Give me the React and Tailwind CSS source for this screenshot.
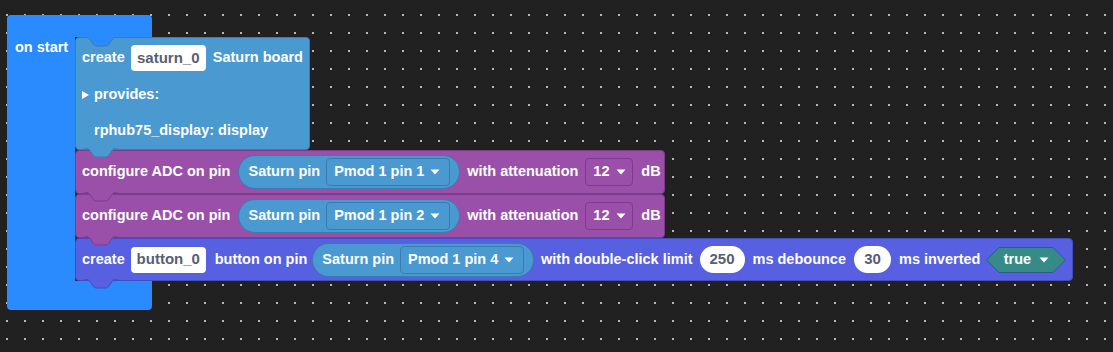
import React from "react";

// connection tab drawn under a block (or as the notch on the first one)
function Tab({ fill, stroke, className }) {
    return (
        <svg
            className={`absolute left-[7px] z-10 ${className}`}
            width="36"
            height="10"
            viewBox="0 0 36 10"
        >
            <path
                d="M1,0 C5,0 6,1 8,4 L10,7 C11,8.5 12,9 14,9 L22,9 C24,9 25,8.5 26,7 L28,4 C30,1 31,0 35,0"
                fill={fill}
                stroke={stroke}
                strokeWidth="1"
            />
        </svg>
    );
}

function Caret() {
    return (
        <svg width="10" height="6" viewBox="0 0 10 6" className="shrink-0">
            <polygon points="0.5,0.5 9.5,0.5 5,5.5" fill="#fff" />
        </svg>
    );
}

function Dropdown({ children, border, className = "" }) {
    return (
        <div
            className={`flex items-center h-[28px] rounded-[4px] border ${border} pl-[7px] pr-[8px] gap-[6px] ${className}`}
        >
            <span>{children}</span>
            <Caret />
        </div>
    );
}

function SaturnPin({ pin }) {
    return (
        <div className="flex items-center h-[34px] rounded-full bg-[#4a99d0] border border-[#3b7cae] pl-[9px] pr-[9px] gap-[6px]">
            <span>Saturn pin</span>
            <Dropdown border="border-[#3b7cae]" className="w-[124px]">
                Pmod 1 pin {pin}
            </Dropdown>
        </div>
    );
}

function TextField({ children, w }) {
    return (
        <div
            className={`flex items-center justify-center h-[26px] ${w} rounded-[4px] bg-white text-[#575e75] text-[15px]`}
        >
            {children}
        </div>
    );
}

function NumField({ children, w }) {
    return (
        <div
            className={`flex items-center justify-center h-[27px] ${w} rounded-full bg-white text-[#575e75] text-[15px]`}
        >
            {children}
        </div>
    );
}

function AdcBlock({ pin }) {
    return (
        <div className="relative flex items-center w-[590px] h-[44px] bg-[#9a50a8] border border-[#7b3c89] rounded-[4px] pl-[6px]">
            <span>configure ADC on pin</span>
            <div className="ml-[8px]">
                <SaturnPin pin={pin} />
            </div>
            <span className="ml-[7px]">with attenuation</span>
            <Dropdown border="border-[#7b3c89]" className="ml-[7px] w-[48px] pr-[6px]">
                12
            </Dropdown>
            <span className="ml-[8px]">dB</span>
            <Tab fill="#9a50a8" stroke="#7b3c89" className="top-full -mt-px" />
        </div>
    );
}

function App() {
    return (
        <div className="w-[1113px] h-[352px] overflow-hidden bg-[#212121] bg-[radial-gradient(circle,#b8b8b8_1px,transparent_1.5px)] bg-size-[18px_18px] bg-position-[-2px_6px] pl-[7px] pt-[15px] font-['Liberation_Sans',Arial,sans-serif] font-bold text-[14.5px] text-white">
            {/* on start */}
            <div className="flex flex-col w-max">
                <div className="w-[145px] h-[22px] bg-[#2a8aff] rounded-t-[4px]" />

                <div className="flex">
                    <div className="w-[68px] bg-[#2a8aff] pl-[8px] leading-[20px]">on start</div>

                    <div className="flex flex-col items-start">
                        {/* create Saturn board */}
                        <div className="relative w-[235px] bg-[#4a99d0] border border-[#3b7cae] rounded-[4px] pl-[6px] pt-[7px] pb-[9px]">
                            <Tab fill="#2a8aff" stroke="#3b7cae" className="-top-px" />
                            <div className="flex items-center h-[26px]">
                                <span>create</span>
                                <div className="ml-[6px]">
                                    <TextField w="w-[75px]">saturn_0</TextField>
                                </div>
                                <span className="ml-[7px]">Saturn board</span>
                            </div>
                            <div className="flex items-center h-[20px] mt-[14px]">
                                <svg width="7" height="8" viewBox="0 0 7 8">
                                    <polygon points="0,0 7,4 0,8" fill="#fff" />
                                </svg>
                                <span className="ml-[5px]">provides:</span>
                            </div>
                            <div className="h-[20px] leading-[20px] mt-[15px] pl-[12px]">
                                rphub75_display: display
                            </div>
                            <Tab fill="#4a99d0" stroke="#3b7cae" className="top-full -mt-px" />
                        </div>

                        <AdcBlock pin="1" />
                        <AdcBlock pin="2" />

                        {/* create button */}
                        <div className="relative flex items-center w-[998px] h-[43px] bg-[#5660e0] border border-[#434bbd] rounded-[4px] pl-[6px]">
                            <span>create</span>
                            <div className="ml-[6px]">
                                <TextField w="w-[75px]">button_0</TextField>
                            </div>
                            <span className="ml-[9px]">button on pin</span>
                            <div className="ml-[5px]">
                                <SaturnPin pin="4" />
                            </div>
                            <span className="ml-[7px]">with double-click limit</span>
                            <div className="ml-[7px]">
                                <NumField w="w-[45px]">250</NumField>
                            </div>
                            <span className="ml-[8px]">ms debounce</span>
                            <div className="ml-[8px]">
                                <NumField w="w-[37px]">30</NumField>
                            </div>
                            <span className="ml-[8px]">ms inverted</span>
                            <div className="relative ml-[6px] w-[80px] h-[26px] flex items-center justify-center gap-[8px]">
                                <svg className="absolute inset-0" width="80" height="26" viewBox="0 0 80 26">
                                    <polygon
                                        points="0.5,13 13,0.5 67,0.5 79.5,13 67,25.5 13,25.5"
                                        fill="#368a87"
                                        stroke="#2d5c8c"
                                        strokeWidth="1"
                                    />
                                </svg>
                                <span className="relative">true</span>
                                <span className="relative flex">
                                    <Caret />
                                </span>
                            </div>
                            <Tab fill="#5660e0" stroke="#434bbd" className="top-full -mt-px" />
                        </div>
                    </div>
                </div>

                <div className="w-[145px] h-[29px] bg-[#2a8aff] rounded-b-[4px]" />
            </div>
        </div>
    );
}

export default App;
